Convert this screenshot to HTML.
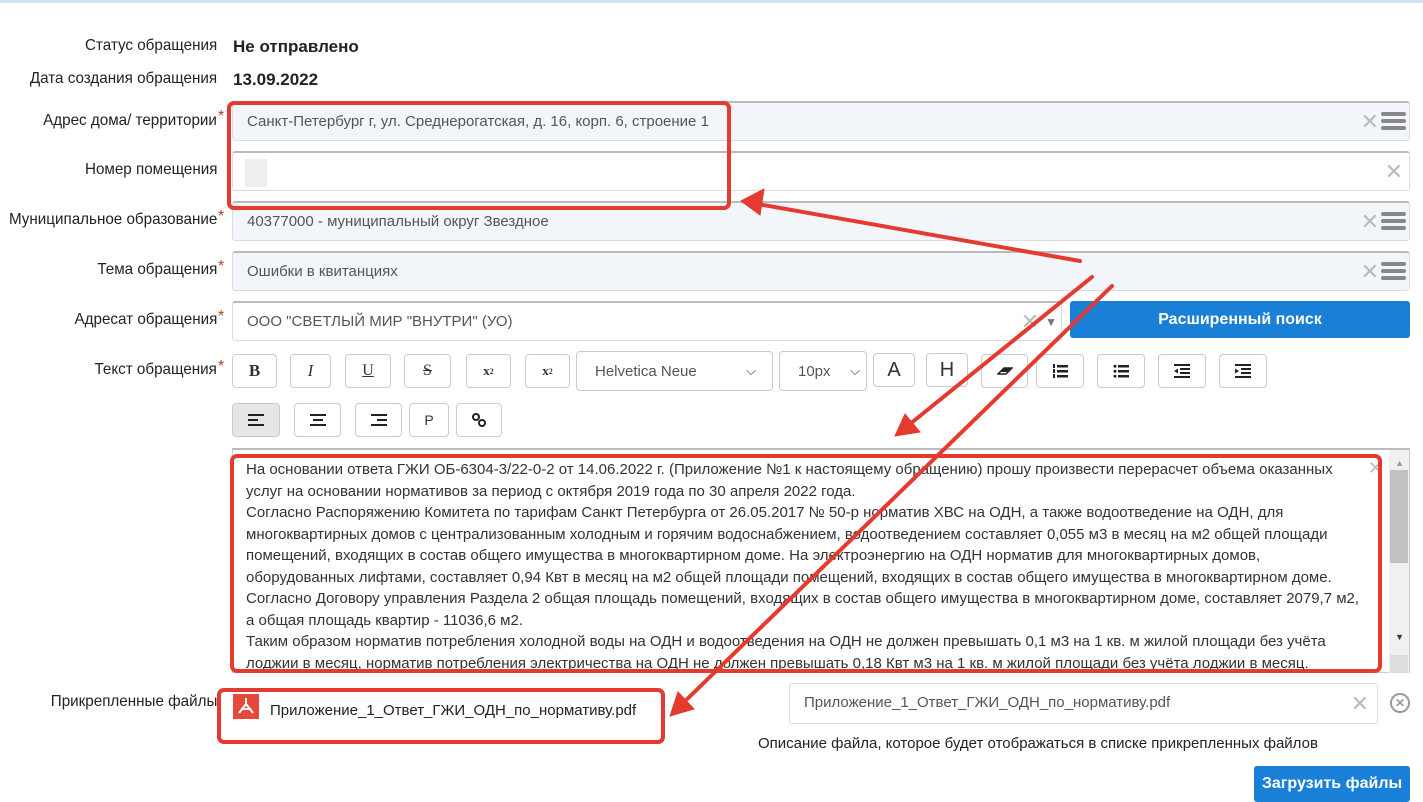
<!DOCTYPE html>
<html><head><meta charset="utf-8">
<style>
*{box-sizing:border-box;margin:0;padding:0}
body{width:1423px;height:796px;background:#fff;font-family:"Liberation Sans",Arial,sans-serif;position:relative;overflow:hidden;color:#222}
.a{position:absolute}
.lbl{position:absolute;right:1206px;font-size:16px;color:#222;white-space:nowrap;transform:scaleX(.95);transform-origin:right center}
.star{color:#c0392b;position:absolute;left:218px;font-size:16px}
.val{position:absolute;left:233px;font-size:17px;font-weight:bold}
.inp{position:absolute;left:232px;width:1178px;height:40px;border:1px solid #ddd;border-top:2px solid #bbb;border-radius:3px;background:#f2f5fa;font-size:15px;color:#555;padding:10px 14px}
.x{position:absolute;font-size:22px;color:#bbb;font-weight:300}
.hm{position:absolute;right:3px;top:9px;width:25px}
.hm i{display:block;height:4px;background:#888;border-radius:2px;margin-bottom:3px}
.btn{position:absolute;height:34px;border:1px solid #ccc;border-radius:4px;background:#fff;display:flex;align-items:center;justify-content:center;font-size:15px;color:#333}
.blue{position:absolute;background:#1a7fd6;color:#fff;border-radius:3px;font-size:16px;font-weight:bold;display:flex;align-items:center;justify-content:center}
.ta{position:absolute;left:232px;top:448px;width:1178px;height:225px;border:1px solid #ccc;border-top:2px solid #bbb;background:#fff}
.txt{position:absolute;left:246px;top:459px;width:1115px;font-size:15px;line-height:21.5px;color:#333}
.red{position:absolute;border:4px solid #e53a30;border-radius:7px}
</style></head><body>
<div class="a" style="left:0;top:0;width:1423px;height:3px;background:#cfe3f5"></div>

<div class="lbl" style="top:37px">Статус обращения</div>
<div class="val" style="top:37px">Не отправлено</div>
<div class="lbl" style="top:70px">Дата создания обращения</div>
<div class="val" style="top:70px">13.09.2022</div>

<div class="lbl" style="top:112px">Адрес дома/ территории</div><span class="star" style="top:108px">*</span>
<div class="inp" style="top:101px">Санкт-Петербург г, ул. Среднерогатская, д. 16, корп. 6, строение 1<span class="x" style="right:30px;top:6px">✕</span><div class="hm"><i></i><i></i><i></i></div></div>

<div class="lbl" style="top:161px">Номер помещения</div>
<div class="inp" style="top:151px;background:#fff"><span class="a" style="left:12px;top:6px;width:22px;height:28px;background:#eee"></span><span class="x" style="right:6px;top:6px">✕</span></div>

<div class="lbl" style="top:211px">Муниципальное образование</div><span class="star" style="top:208px">*</span>
<div class="inp" style="top:201px">40377000 - муниципальный округ Звездное<span class="x" style="right:30px;top:6px">✕</span><div class="hm"><i></i><i></i><i></i></div></div>

<div class="lbl" style="top:261px">Тема обращения</div><span class="star" style="top:258px">*</span>
<div class="inp" style="top:251px">Ошибки в квитанциях<span class="x" style="right:30px;top:6px">✕</span><div class="hm"><i></i><i></i><i></i></div></div>

<div class="lbl" style="top:311px">Адресат обращения</div><span class="star" style="top:308px">*</span>
<div class="inp" style="top:301px;width:830px;background:#fff">ООО "СВЕТЛЫЙ МИР "ВНУТРИ" (УО)<span class="x" style="right:22px;top:6px">✕</span><span class="a" style="right:4px;top:12px;font-size:12px;color:#777">▼</span></div>
<div class="blue" style="left:1070px;top:301px;width:340px;height:37px">Расширенный поиск</div>

<div class="lbl" style="top:361px">Текст обращения</div><span class="star" style="top:358px">*</span>
<div class="btn" style="left:232px;top:354px;width:45px;font-family:'Liberation Serif';font-weight:bold;font-size:17px">B</div>
<div class="btn" style="left:290px;top:354px;width:41px;font-family:'Liberation Serif';font-style:italic;font-size:17px">I</div>
<div class="btn" style="left:345px;top:354px;width:46px;font-family:'Liberation Serif';text-decoration:underline;font-size:16px">U</div>
<div class="btn" style="left:404px;top:354px;width:47px;font-family:'Liberation Serif';text-decoration:line-through;font-size:16px">S</div>
<div class="btn" style="left:466px;top:354px;width:45px;font-family:'Liberation Serif';font-weight:bold;font-size:13px">x<sub style="font-size:8px">2</sub></div>
<div class="btn" style="left:525px;top:354px;width:45px;font-family:'Liberation Serif';font-weight:bold;font-size:13px">x<sup style="font-size:8px">2</sup></div>
<div class="btn" style="left:576px;top:351px;width:197px;height:40px;justify-content:space-between;padding:0 16px 0 18px;color:#555">Helvetica Neue<span style="font-size:13px;color:#333">⌵</span></div>
<div class="btn" style="left:779px;top:351px;width:88px;height:40px;justify-content:space-between;padding:0 6px 0 18px;color:#555">10px<span style="font-size:13px;color:#333">⌵</span></div>
<div class="btn" style="left:873px;top:353px;width:42px;font-size:20px">A</div>
<div class="btn" style="left:926px;top:353px;width:42px;font-size:20px">H</div>
<div class="btn" style="left:981px;top:354px;width:47px"><svg width="16" height="10"><path d="M1 8 L7 2 L15 2 L9 8Z" fill="none" stroke="#222" stroke-width="1.5"/><path d="M7 2 L15 2 L11 6 L4 6Z" fill="#222"/></svg></div>
<div class="btn" style="left:1036px;top:354px;width:48px"><svg width="16" height="14"><g fill="#222"><rect x="5" y="1" width="11" height="2.5"/><rect x="5" y="6" width="11" height="2.5"/><rect x="5" y="11" width="11" height="2.5"/><rect x="1" y="0" width="2" height="4"/><rect x="1" y="5" width="2" height="4"/><rect x="1" y="10" width="2" height="4"/></g></svg></div>
<div class="btn" style="left:1097px;top:354px;width:48px"><svg width="16" height="14"><g fill="#222"><rect x="5" y="1" width="11" height="2.5"/><rect x="5" y="6" width="11" height="2.5"/><rect x="5" y="11" width="11" height="2.5"/><circle cx="2" cy="2.2" r="1.5"/><circle cx="2" cy="7.2" r="1.5"/><circle cx="2" cy="12.2" r="1.5"/></g></svg></div>
<div class="btn" style="left:1158px;top:354px;width:48px"><svg width="16" height="14"><g fill="#222"><rect x="0" y="0" width="16" height="2"/><rect x="6" y="4" width="10" height="2"/><rect x="6" y="8" width="10" height="2"/><rect x="0" y="12" width="16" height="2"/><path d="M0 7 L4 4.5 L4 9.5Z"/></g></svg></div>
<div class="btn" style="left:1219px;top:354px;width:48px"><svg width="16" height="14"><g fill="#222"><rect x="0" y="0" width="16" height="2"/><rect x="6" y="4" width="10" height="2"/><rect x="6" y="8" width="10" height="2"/><rect x="0" y="12" width="16" height="2"/><path d="M4 7 L0 4.5 L0 9.5Z"/></g></svg></div>

<div class="btn" style="left:232px;top:403px;width:48px;background:#e6e6e6"><svg width="16" height="12"><g fill="#222"><rect x="0" y="0" width="16" height="2"/><rect x="0" y="5" width="10" height="2"/><rect x="0" y="10" width="16" height="2"/></g></svg></div>
<div class="btn" style="left:294px;top:403px;width:47px"><svg width="16" height="12"><g fill="#222"><rect x="0" y="0" width="16" height="2"/><rect x="3" y="5" width="10" height="2"/><rect x="0" y="10" width="16" height="2"/></g></svg></div>
<div class="btn" style="left:355px;top:403px;width:47px"><svg width="16" height="12"><g fill="#222"><rect x="0" y="0" width="16" height="2"/><rect x="6" y="5" width="10" height="2"/><rect x="0" y="10" width="16" height="2"/></g></svg></div>
<div class="btn" style="left:409px;top:403px;width:40px;font-size:14px">P</div>
<div class="btn" style="left:456px;top:403px;width:46px"><svg width="14" height="14"><g fill="none" stroke="#222" stroke-width="2"><circle cx="4" cy="4" r="3"/><circle cx="10" cy="10" r="3"/></g></svg></div>

<div class="ta">
<div class="a" style="right:0;top:0;width:20px;height:223px;background:#f0f0f0"></div>
<div class="a" style="right:5px;top:8px;font-size:9px;color:#999">▲</div>
<div class="a" style="right:1px;top:20px;width:18px;height:93px;background:#c1c1c1"></div>
<div class="a" style="right:5px;top:182px;font-size:9px;color:#333">▼</div>
<div class="a" style="right:1px;top:205px;width:18px;height:18px;background:#ddd"></div>
<span class="x" style="right:26px;top:8px;font-size:18px">✕</span>
</div>
<div class="txt">На основании ответа ГЖИ ОБ-6304-3/22-0-2 от 14.06.2022 г. (Приложение №1 к настоящему обращению) прошу произвести перерасчет объема оказанных услуг на основании нормативов за период с октября 2019 года по 30 апреля 2022 года.<br>Согласно Распоряжению Комитета по тарифам Санкт Петербурга от 26.05.2017 № 50-р норматив ХВС на ОДН, а также водоотведение на ОДН, для многоквартирных домов с централизованным холодным и горячим водоснабжением, водоотведением составляет 0,055 м3 в месяц на м2 общей площади помещений, входящих в состав общего имущества в многоквартирном доме. На электроэнергию на ОДН норматив для многоквартирных домов, оборудованных лифтами, составляет 0,94 Квт в месяц на м2 общей площади помещений, входящих в состав общего имущества в многоквартирном доме.<br>Согласно Договору управления Раздела 2 общая площадь помещений, входящих в состав общего имущества в многоквартирном доме, составляет 2079,7 м2, а общая площадь квартир - 11036,6 м2.<br>Таким образом норматив потребления холодной воды на ОДН и водоотведения на ОДН не должен превышать 0,1 м3 на 1 кв. м жилой площади без учёта лоджии в месяц, норматив потребления электричества на ОДН не должен превышать 0,18 Квт м3 на 1 кв. м жилой площади без учёта лоджии в месяц.</div>
<div class="a" style="left:0;top:673px;width:1423px;height:123px;background:#fff"></div>

<div class="lbl" style="top:693px">Прикрепленные файлы</div>
<div class="a" style="left:233px;top:694px;width:26px;height:25px;background:#e8483c"><svg width="26" height="25"><path d="M13 4 L13 10 M13 10 L6 19 M13 10 L20 19 M8 15 L18 15" stroke="#fff" stroke-width="2" fill="none"/></svg></div>
<div class="a" style="left:270px;top:702px;font-size:15px;color:#222">Приложение_1_Ответ_ГЖИ_ОДН_по_нормативу.pdf</div>
<div class="inp" style="left:789px;top:683px;width:589px;height:41px;background:#fff;border-top:1px solid #ddd;color:#555">Приложение_1_Ответ_ГЖИ_ОДН_по_нормативу.pdf<span class="x" style="right:8px;top:7px">✕</span></div>
<div class="a" style="left:1390px;top:693px;width:20px;height:20px;border:2px solid #999;border-radius:50%;color:#999;font-size:12px;font-weight:bold;text-align:center;line-height:16px">✕</div>
<div class="a" style="left:758px;top:735px;font-size:15px;color:#222">Описание файла, которое будет отображаться в списке прикрепленных файлов</div>
<div class="blue" style="left:1254px;top:766px;width:156px;height:36px">Загрузить файлы</div>

<div class="red" style="left:227px;top:101px;width:504px;height:109px"></div>
<div class="red" style="left:230px;top:454px;width:1152px;height:219px"></div>
<div class="red" style="left:217px;top:688px;width:448px;height:56px"></div>

<svg class="a" style="left:0;top:0" width="1423" height="796">
<g stroke="#e53a30" stroke-width="4" fill="#e53a30" stroke-linecap="round">
<line x1="1080" y1="261" x2="752" y2="203"/>
<path d="M741 201 L764 189 L760 215Z" stroke-width="1"/>
<line x1="1092" y1="277" x2="905" y2="428"/>
<path d="M895 436 L905 414 L920 432Z" stroke-width="1"/>
<line x1="1112" y1="286" x2="680" y2="706"/>
<path d="M670 716 L678 692 L694 709Z" stroke-width="1"/>
</g>
</svg>
</body></html>
